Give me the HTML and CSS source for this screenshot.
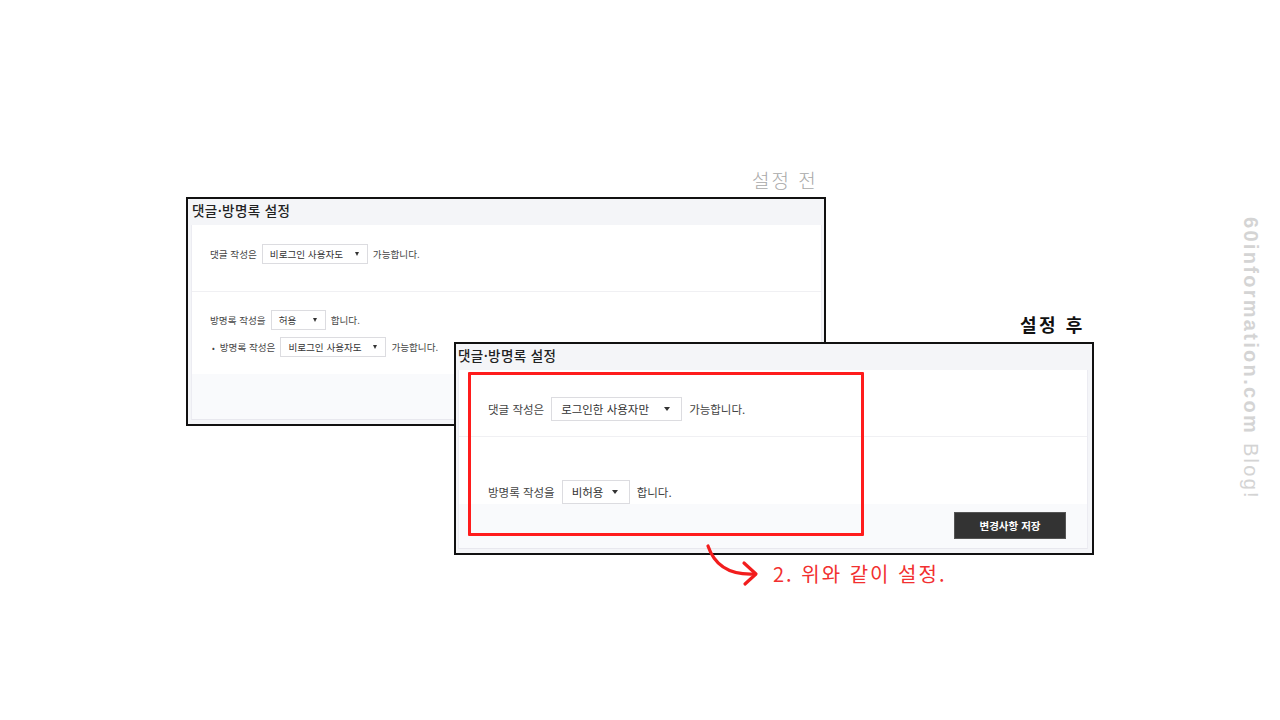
FILE: index.html
```html
<!DOCTYPE html>
<html lang="ko">
<head>
<meta charset="utf-8">
<title>댓글·방명록 설정</title>
<link rel="stylesheet" href="styles.css">
</head>
<body>
<div class="stage">
  <div class="label label-before">설정 전</div>

  <section class="panel panel-before">
    <div class="panel-title">댓글·방명록 설정</div>
    <div class="panel-inner">
      <div class="row row-a">
        <div class="line">
          <span>댓글 작성은</span>
          <span class="select sel-wide"><span>비로그인 사용자도</span><i class="caret"></i></span>
          <span>가능합니다.</span>
        </div>
      </div>
      <div class="row row-b">
        <div class="line">
          <span>방명록 작성을</span>
          <span class="select sel-narrow"><span>허용</span><i class="caret"></i></span>
          <span>합니다.</span>
        </div>
        <div class="line sub">
          <span class="bullet">•</span>
          <span>방명록 작성은</span>
          <span class="select sel-wide"><span>비로그인 사용자도</span><i class="caret"></i></span>
          <span>가능합니다.</span>
        </div>
      </div>
      <div class="footer"></div>
    </div>
  </section>

  <div class="label label-after">설정 후</div>

  <section class="panel panel-after">
    <div class="panel-title">댓글·방명록 설정</div>
    <div class="panel-inner">
      <div class="row row-c">
        <div class="line">
          <span>댓글 작성은</span>
          <span class="select sel-login"><span>로그인한 사용자만</span><i class="caret"></i></span>
          <span>가능합니다.</span>
        </div>
      </div>
      <div class="row row-d">
        <div class="line">
          <span>방명록 작성을</span>
          <span class="select sel-deny"><span>비허용</span><i class="caret"></i></span>
          <span>합니다.</span>
        </div>
      </div>
      <div class="footer footer-btn">
        <button class="save">변경사항 저장</button>
      </div>
    </div>
  </section>

  <div class="highlight"></div>

  <svg class="arrow" width="70" height="50" viewBox="700 540 70 50">
    <path d="M708 546 Q718 576 755 574" fill="none" stroke="#f21d1d" stroke-width="3.2" stroke-linecap="round"/>
    <path d="M744 563 L756 574 L745 584" fill="none" stroke="#f21d1d" stroke-width="3.2" stroke-linecap="round" stroke-linejoin="round"/>
  </svg>
  <div class="note">2. 위와 같이 설정.</div>

  <div class="watermark"><b>60information.com</b> Blog!</div>
</div>
</body>
</html>
```

FILE: styles.css
```css
* { box-sizing: border-box; }
html, body { margin: 0; padding: 0; background: #fff; }
body {
  font-family: "Noto Sans CJK KR", "Noto Sans", sans-serif;
  color: #333;
}
.stage {
  position: relative;
  width: 1280px;
  height: 720px;
  overflow: hidden;
}

.label {
  position: absolute;
  line-height: 1;
  white-space: nowrap;
}
.label-before {
  left: 752px;
  top: 170px;
  font-size: 19px;
  color: #a8a8a8;
  letter-spacing: 2px;
  font-weight: 300;
}
.label-after {
  left: 1020px;
  top: 315px;
  font-size: 18px;
  font-weight: 700;
  color: #111;
  letter-spacing: 2.5px;
}

.panel {
  position: absolute;
  width: 640px;
  border: 2px solid #111;
  background: #f4f5f8;
  display: flex;
  flex-direction: column;
}
.panel-before { left: 186px; top: 197px; height: 229px; }
.panel-after  { left: 454px; top: 342px; height: 213px; }

.panel-title {
  flex: none;
  height: 26px;
  line-height: 22px;
  padding-left: 4px;
  font-size: 13.5px;
  font-weight: 500;
  color: #222;
  letter-spacing: 0.4px;
}
.panel-after .panel-title { padding-left: 2px; }

.panel-inner {
  margin: 0 2px 0 3px;
  border-left: 1px solid #ececf2;
  border-right: 1px solid #ececf2;
  border-bottom: 1px solid #e8e8ee;
  display: flex;
  flex-direction: column;
}
.panel-after .panel-inner { margin: 0 4px 0 2px; }

.row {
  flex: none;
  background: #fff;
  display: flex;
  flex-direction: column;
}
.row-a { height: 67px; padding: 19px 0 0 18px; border-bottom: 1px solid #f0f0f3; font-size: 9.6px; }
.row-b { height: 82px; padding: 18px 0 0 18px; gap: 7px; font-size: 9.6px; }
.row-c { height: 67px; padding: 27px 0 0 29px; border-bottom: 1px solid #f0f0f3; font-size: 11.5px; }
.row-d { height: 67px; padding: 43px 0 0 29px; font-size: 11.5px; }

.line {
  display: flex;
  align-items: center;
  gap: 5px;
  color: #444;
  white-space: nowrap;
}
.row-c .line, .row-d .line { gap: 7px; }
.line.sub { padding-left: 2px; }
.bullet { font-size: 8px; }

.select {
  display: flex;
  align-items: center;
  justify-content: space-between;
  background: #fff;
  border: 1px solid #dcdce0;
  color: #333;
  height: 20px;
  padding: 0 8px 0 7px;
}
.sel-wide { width: 106px; }
.sel-narrow { width: 55px; }
.sel-login { width: 131px; height: 24px; padding: 0 11px 0 9px; }
.sel-deny { width: 68px; height: 24px; padding: 0 11px 0 9px; }
.caret {
  width: 0;
  height: 0;
  border-left: 2.5px solid transparent;
  border-right: 2.5px solid transparent;
  border-top: 4px solid #333;
}
.sel-login .caret, .sel-deny .caret {
  border-left-width: 3px;
  border-right-width: 3px;
  border-top-width: 4px;
}

.footer {
  flex: none;
  height: 45px;
  background: #f9fafc;
}
.footer-btn {
  height: 44px;
  display: flex;
  justify-content: flex-end;
  align-items: flex-start;
  padding: 8px 21px 0 0;
}
.save {
  width: 112px;
  height: 27px;
  background: #333;
  border: 1px solid #555;
  color: #fff;
  font-family: "Noto Sans CJK KR", sans-serif;
  font-size: 10.5px;
  font-weight: 700;
  padding: 0;
}

.highlight {
  position: absolute;
  left: 468px;
  top: 372px;
  width: 396px;
  height: 164px;
  border: 3px solid #ff1c1c;
  border-radius: 1px;
}

.arrow {
  position: absolute;
  left: 700px;
  top: 540px;
}
.note {
  position: absolute;
  left: 773px;
  top: 561px;
  font-size: 20px;
  line-height: 26px;
  color: #f23030;
  letter-spacing: 2px;
  white-space: nowrap;
}

.watermark {
  position: absolute;
  left: 1239px;
  top: 217px;
  writing-mode: vertical-rl;
  font-family: "Liberation Sans", "DejaVu Sans", sans-serif;
  font-size: 20px;
  letter-spacing: 2.3px;
  color: #d4d4d4;
  white-space: nowrap;
  line-height: 24px;
}
.watermark b { font-weight: 700; }
```
